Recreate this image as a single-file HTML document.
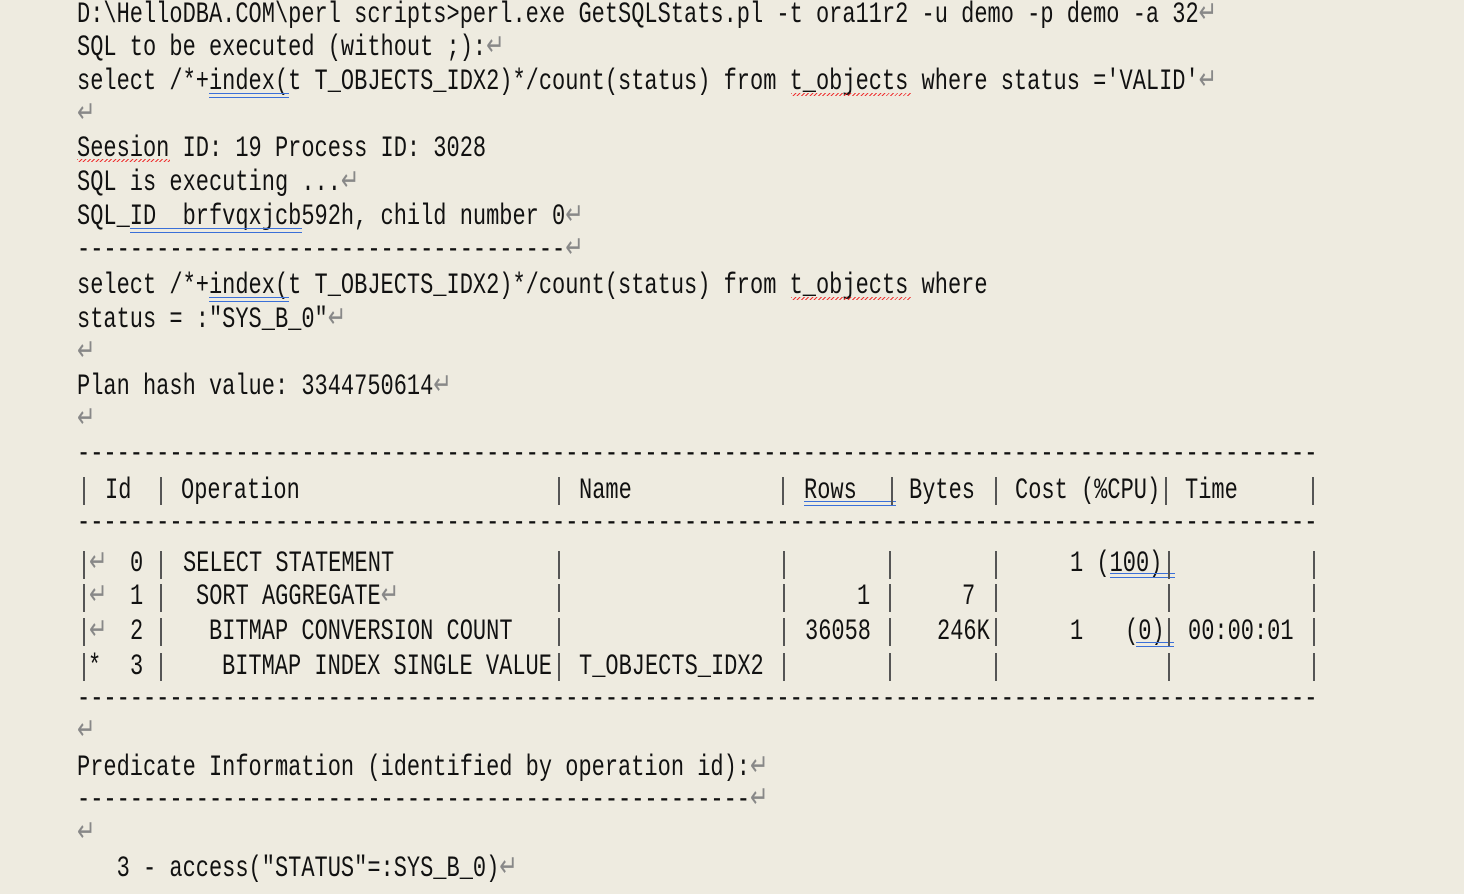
<!DOCTYPE html>
<html><head><meta charset="utf-8"><style>
body{margin:0;width:1464px;height:892px;background:#eeebe0;overflow:hidden;position:relative;font-family:"Liberation Mono",monospace;color:#111}
#c{position:absolute;left:0;top:2px;width:1464px;height:892px}
.t{position:absolute;font-size:30px;line-height:30px;height:30px;white-space:pre;transform:scaleX(.733);transform-origin:0 0}
.r{color:#888}
.b{position:absolute;width:1.5px;height:28px;background:#555}
.u{position:absolute;height:3px;border-top:1px solid #3a6fd8;border-bottom:1px solid #3a6fd8}
.w{position:absolute;height:3px;background:repeating-linear-gradient(135deg,#e33 0 1px,transparent 1px 3px)}
</style></head><body><div id="c">
<div class="t" style="left:77px;top:-2px">D:\HelloDBA.COM\perl scripts&gt;perl.exe GetSQLStats.pl -t ora11r2 -u demo -p demo -a 32<span class="r">↵</span></div>
<div class="t" style="left:77px;top:31px">SQL to be executed (without ;):<span class="r">↵</span></div>
<div class="t" style="left:77px;top:65px">select /*+index(t T_OBJECTS_IDX2)*/count(status) from t_objects where status ='VALID'<span class="r">↵</span></div>
<div class="u" style="left:209px;top:91px;width:80px"></div>
<div class="w" style="left:791px;top:91px;width:120px"></div>
<div class="t r" style="left:77px;top:98px">↵</div>
<div class="t" style="left:77px;top:132px">Seesion ID: 19 Process ID: 3028</div>
<div class="w" style="left:77px;top:157px;width:93px"></div>
<div class="t" style="left:77px;top:166px">SQL is executing ...<span class="r">↵</span></div>
<div class="t" style="left:77px;top:200px">SQL_ID  brfvqxjcb592h, child number 0<span class="r">↵</span></div>
<div class="u" style="left:130px;top:226px;width:172px"></div>
<div class="t" style="left:77px;top:233px">-------------------------------------<span class="r">↵</span></div>
<div class="t" style="left:77px;top:269px">select /*+index(t T_OBJECTS_IDX2)*/count(status) from t_objects where</div>
<div class="u" style="left:209px;top:295px;width:80px"></div>
<div class="w" style="left:791px;top:295px;width:120px"></div>
<div class="t" style="left:77px;top:303px">status = :"SYS_B_0"<span class="r">↵</span></div>
<div class="t r" style="left:77px;top:336px">↵</div>
<div class="t" style="left:77px;top:370px">Plan hash value: 3344750614<span class="r">↵</span></div>
<div class="t r" style="left:77px;top:403px">↵</div>
<div class="t" style="left:77px;top:437px">----------------------------------------------------------------------------------------------</div>
<div class="t" style="left:105px;top:474px">Id</div>
<div class="t" style="left:181px;top:474px">Operation</div>
<div class="t" style="left:579px;top:474px">Name</div>
<div class="t" style="left:804px;top:474px">Rows</div>
<div class="u" style="left:804px;top:499px;width:92px"></div>
<div class="t" style="left:909px;top:474px">Bytes</div>
<div class="t" style="left:1015px;top:474px">Cost (%CPU)</div>
<div class="t" style="left:1185px;top:474px">Time</div>
<div class="b" style="left:83px;top:475px"></div><div class="b" style="left:160px;top:475px"></div><div class="b" style="left:558px;top:475px"></div><div class="b" style="left:782px;top:475px"></div><div class="b" style="left:891px;top:475px"></div><div class="b" style="left:995px;top:475px"></div><div class="b" style="left:1165px;top:475px"></div><div class="b" style="left:1312px;top:475px"></div>
<div class="t" style="left:77px;top:506px">----------------------------------------------------------------------------------------------</div>
<div class="t r" style="left:89px;top:547px">↵</div><div class="t" style="left:130px;top:547px">0</div><div class="t" style="left:183px;top:547px">SELECT STATEMENT</div>
<div class="t" style="left:1070px;top:547px">1 (100)</div><div class="u" style="left:1110px;top:571px;width:65px"></div>
<div class="t r" style="left:89px;top:580px">↵</div><div class="t" style="left:130px;top:580px">1</div><div class="t" style="left:196px;top:580px">SORT AGGREGATE<span class="r">↵</span></div>
<div class="t" style="left:857px;top:580px">1</div><div class="t" style="left:962px;top:580px">7</div>
<div class="t r" style="left:89px;top:615px">↵</div><div class="t" style="left:130px;top:615px">2</div><div class="t" style="left:209px;top:615px">BITMAP CONVERSION COUNT</div>
<div class="t" style="left:805px;top:615px">36058</div><div class="t" style="left:937px;top:615px">246K</div><div class="t" style="left:1070px;top:615px">1</div><div class="t" style="left:1125px;top:615px">(0)</div><div class="u" style="left:1136px;top:640px;width:38px"></div><div class="t" style="left:1188px;top:615px">00:00:01</div>
<div class="t" style="left:88px;top:650px">*</div><div class="t" style="left:130px;top:650px">3</div><div class="t" style="left:222px;top:650px">BITMAP INDEX SINGLE VALUE</div><div class="t" style="left:579px;top:650px">T_OBJECTS_IDX2</div>
<div class="b" style="left:83px;top:549px"></div><div class="b" style="left:160px;top:549px"></div><div class="b" style="left:558px;top:549px"></div><div class="b" style="left:783px;top:549px"></div><div class="b" style="left:889px;top:549px"></div><div class="b" style="left:995px;top:549px"></div><div class="b" style="left:1168px;top:549px"></div><div class="b" style="left:1313px;top:549px"></div>
<div class="b" style="left:83px;top:582px"></div><div class="b" style="left:160px;top:582px"></div><div class="b" style="left:558px;top:582px"></div><div class="b" style="left:783px;top:582px"></div><div class="b" style="left:889px;top:582px"></div><div class="b" style="left:995px;top:582px"></div><div class="b" style="left:1168px;top:582px"></div><div class="b" style="left:1313px;top:582px"></div>
<div class="b" style="left:83px;top:616px"></div><div class="b" style="left:160px;top:616px"></div><div class="b" style="left:558px;top:616px"></div><div class="b" style="left:783px;top:616px"></div><div class="b" style="left:889px;top:616px"></div><div class="b" style="left:995px;top:616px"></div><div class="b" style="left:1168px;top:616px"></div><div class="b" style="left:1313px;top:616px"></div>
<div class="b" style="left:83px;top:651px"></div><div class="b" style="left:160px;top:651px"></div><div class="b" style="left:558px;top:651px"></div><div class="b" style="left:783px;top:651px"></div><div class="b" style="left:889px;top:651px"></div><div class="b" style="left:995px;top:651px"></div><div class="b" style="left:1168px;top:651px"></div><div class="b" style="left:1313px;top:651px"></div>
<div class="t" style="left:77px;top:682px">----------------------------------------------------------------------------------------------</div>
<div class="t r" style="left:77px;top:715px">↵</div>
<div class="t" style="left:77px;top:751px">Predicate Information (identified by operation id):<span class="r">↵</span></div>
<div class="t" style="left:77px;top:783px">---------------------------------------------------<span class="r">↵</span></div>
<div class="t r" style="left:77px;top:817px">↵</div>
<div class="t" style="left:77px;top:852px">   3 - access("STATUS"=:SYS_B_0)<span class="r">↵</span></div>
</div></body></html>
